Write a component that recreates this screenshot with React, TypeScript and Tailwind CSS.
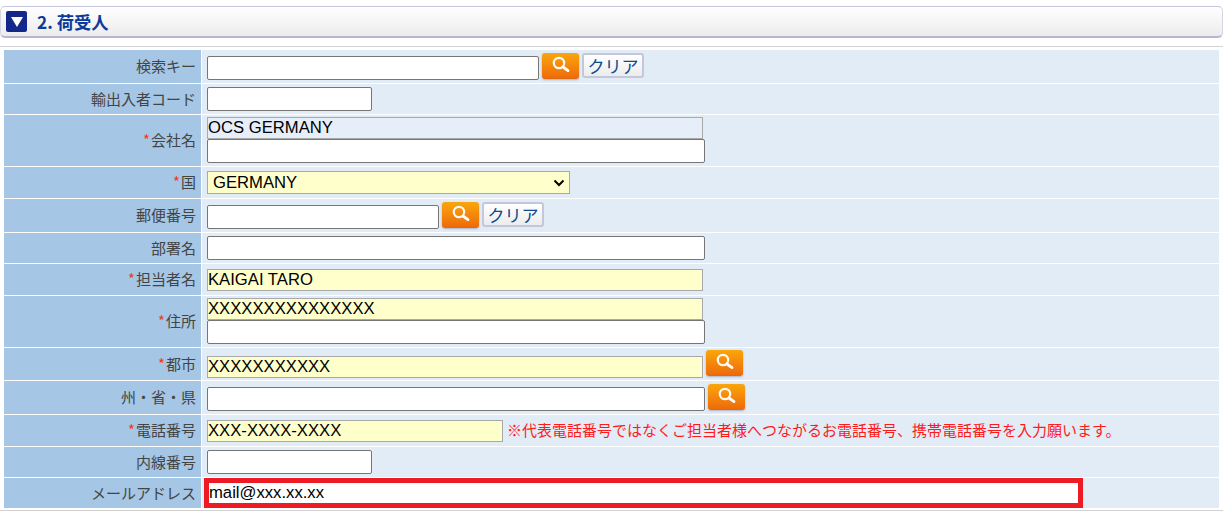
import type { ReactNode } from 'react'

const arial = { fontFamily: '"Liberation Sans", "Noto Sans CJK JP", sans-serif' }

function SearchBtn({ className = '' }: { className?: string }) {
  return (
    <span className={`flex h-[26px] w-[37px] shrink-0 items-center justify-center rounded-[3px] border-b border-[#e06a10] bg-gradient-to-b from-[#f9a60c] to-[#ee6a0a] shadow-[0_1px_2px_rgba(120,120,140,0.5)] ${className}`}>
      <svg width="19" height="19" viewBox="0 0 19 19" fill="none">
        <circle cx="8" cy="7" r="5.2" stroke="#fff" strokeWidth="2.2" opacity="0.95" />
        <path d="M12 11l5 3.6" stroke="#fff" strokeWidth="2.8" strokeLinecap="round" />
      </svg>
    </span>
  )
}

function ClearBtn({ className = '' }: { className?: string }) {
  return (
    <span className={`flex h-[25px] w-[62px] shrink-0 items-center justify-center rounded-[3px] border-2 border-[#c3c7d9] bg-gradient-to-b from-white to-[#ececec] text-[17px] text-[#0b4a8f] ${className}`}>
      クリア
    </span>
  )
}

function Field({ className, value = '' }: { className: string; value?: string }) {
  return (
    <div className={`flex shrink-0 items-center overflow-hidden text-[16.67px] leading-none text-black ${className}`} style={arial}>
      {value}
    </div>
  )
}

const white = 'rounded-[2px] border border-[#767676] bg-white'
const yellow = 'border border-[#a9a9a9] bg-[#ffffcc]'

function Row({ label, required, h, children }: { label: string; required?: boolean; h: string; children: ReactNode }) {
  return (
    <div className={`flex gap-px ${h}`}>
      <div className="flex w-[197px] shrink-0 items-center justify-end bg-[#a5c6e5] pr-[5px] text-[15px] text-[#444]">
        {required && <span className="mr-px text-[#f03c1e]">*</span>}
        {label}
      </div>
      <div className="relative flex min-w-0 flex-1 flex-col justify-center bg-[#e2ecf7] pl-[5px]">{children}</div>
    </div>
  )
}

export default function App() {
  return (
    <div className="h-[516px] w-[1227px] overflow-hidden bg-white pt-[6px]" style={{ fontFamily: '"Noto Sans CJK JP", sans-serif' }}>
      <div className="flex h-[32px] w-[1223px] items-center gap-[10px] rounded-[5px] border border-t-[#c3c6dc] border-x-[#d4d6e4] border-b-2 border-b-[#b4b7cd] bg-gradient-to-b from-white to-[#ececec] pl-[5px]">
        <span className="flex h-[21px] w-[21px] items-center justify-center rounded-[2px] bg-[#14288c]">
          <span className="h-0 w-0 border-x-[6px] border-t-[10px] border-x-transparent border-t-white" />
        </span>
        <span className="text-[17.3px] font-bold text-[#0d3a9c]">2. 荷受人</span>
      </div>
      <div className="mt-[8px] h-px w-[1223px] bg-[#d2d2d2]" />

      <div className="mt-[3px] ml-[4px] flex w-[1215px] flex-col gap-px">
        <Row label="検索キー" h="h-[33px]">
          <div className="flex items-center">
            <Field className={`mt-[2px] h-[24px] w-[332px] ${white}`} />
            <SearchBtn className="ml-[3px] -mt-[2px]" />
            <ClearBtn className="ml-[3px] -mt-[2px]" />
          </div>
        </Row>
        <Row label="輸出入者コード" h="h-[30px]">
          <Field className={`h-[24px] w-[165px] ${white}`} />
        </Row>
        <Row label="会社名" required h="h-[51px]">
          <Field className="-mt-px h-[22px] w-[496px] border border-[#a9a9a9] bg-[#e6eefa]" value="OCS GERMANY" />
          <Field className={`h-[24px] w-[498px] ${white}`} />
        </Row>
        <Row label="国" required h="h-[31px]">
          <div className="flex h-[23px] w-[363px] items-center justify-between border border-[#a9a9a9] bg-[#ffffcc] pl-[5px] pr-[4px] text-[16.67px] text-black" style={arial}>
            GERMANY
            <svg width="12" height="8" viewBox="0 0 12 8" fill="none">
              <path d="M1.5 1.5L6 6l4.5-4.5" stroke="#000" strokeWidth="2" />
            </svg>
          </div>
        </Row>
        <Row label="郵便番号" h="h-[33px]">
          <div className="flex items-center">
            <Field className={`mt-[2px] h-[24px] w-[232px] ${white}`} />
            <SearchBtn className="ml-[3px] -mt-[2px]" />
            <ClearBtn className="ml-[3px] -mt-[2px]" />
          </div>
        </Row>
        <Row label="部署名" h="h-[30px]">
          <Field className={`h-[24px] w-[498px] ${white}`} />
        </Row>
        <Row label="担当者名" required h="h-[31px]">
          <Field className={`h-[22px] w-[496px] pt-[2px] ${yellow}`} value="KAIGAI TARO" />
        </Row>
        <Row label="住所" required h="h-[51px]">
          <Field className={`-mt-px h-[22px] w-[496px] ${yellow}`} value="XXXXXXXXXXXXXXX" />
          <Field className={`h-[24px] w-[498px] ${white}`} />
        </Row>
        <Row label="都市" required h="h-[32px]">
          <div className="flex items-center">
            <Field className={`mt-[5px] h-[22px] w-[496px] pt-[2px] ${yellow}`} value="XXXXXXXXXXX" />
            <SearchBtn className="ml-[3px] -mt-[3px]" />
          </div>
        </Row>
        <Row label="州・省・県" h="h-[33px]">
          <div className="flex items-center">
            <Field className={`mt-[2px] h-[24px] w-[498px] ${white}`} />
            <SearchBtn className="ml-[3px] -mt-[2px]" />
          </div>
        </Row>
        <Row label="電話番号" required h="h-[31px]">
          <div className="flex items-center">
            <Field className={`h-[22px] w-[296px] pt-[2px] ${yellow}`} value="XXX-XXXX-XXXX" />
            <span className="ml-[4px] whitespace-nowrap text-[15px] text-[#ff1a1a]">※代表電話番号ではなくご担当者様へつながるお電話番号、携帯電話番号を入力願います。</span>
          </div>
        </Row>
        <Row label="内線番号" h="h-[30px]">
          <Field className={`h-[24px] w-[165px] ${white}`} />
        </Row>
        <Row label="メールアドレス" h="h-[30px]">
          <div className="-mt-[1px] -ml-[3px] flex h-[30px] w-[879px] items-center border-[5px] border-[#ed1c24] bg-white text-[16.67px] text-black" style={arial}>
            mail@xxx.xx.xx
          </div>
        </Row>
      </div>
      <div className="mt-[2px] h-px w-[1223px] bg-[#d2d2d2]" />
    </div>
  )
}
